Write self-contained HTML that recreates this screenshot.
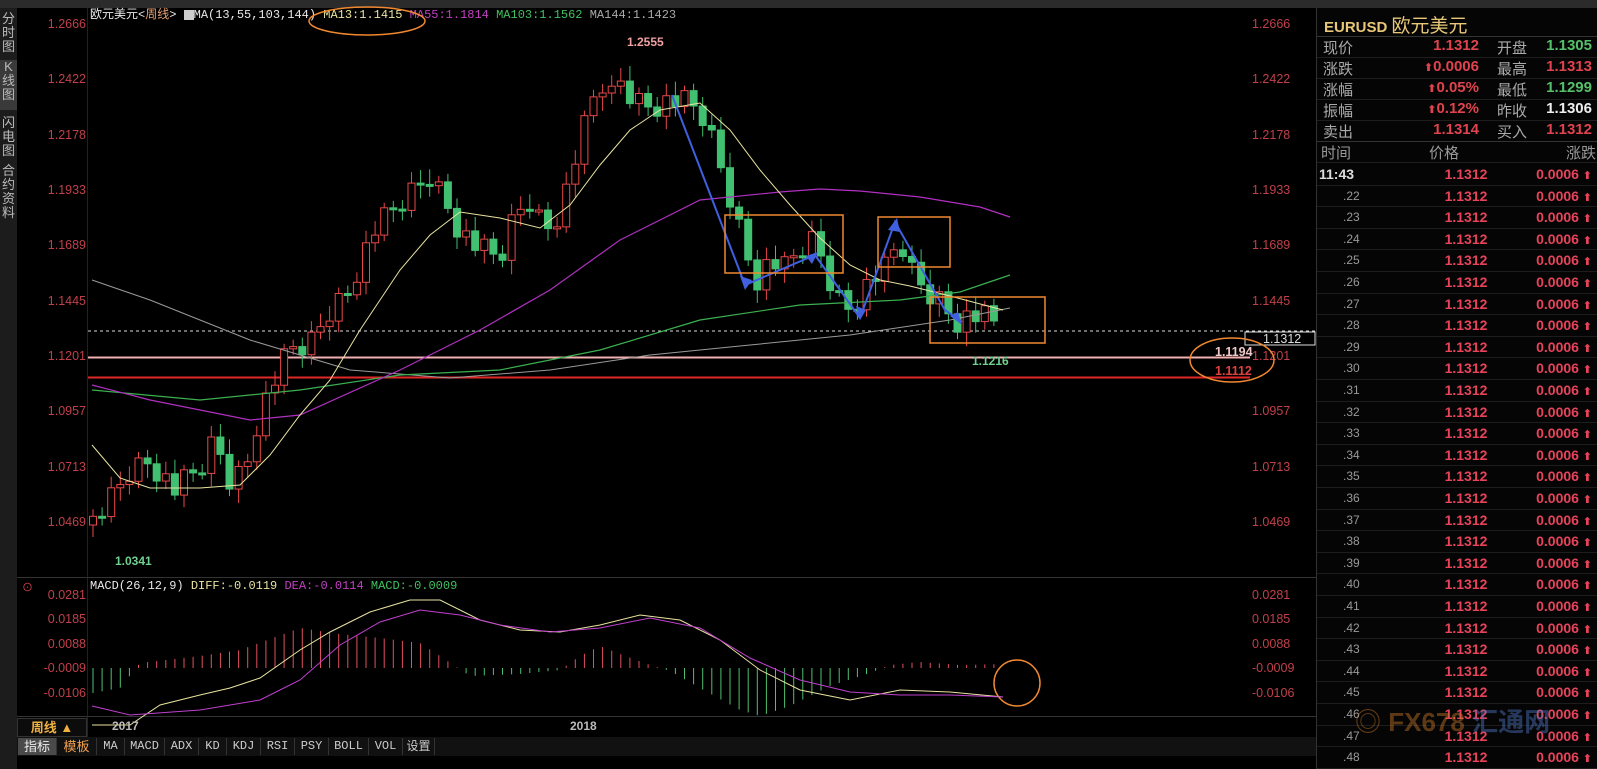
<!DOCTYPE html>
<html><head><meta charset="utf-8"><style>
*{margin:0;padding:0;box-sizing:border-box}
body{width:1597px;height:769px;background:#000;overflow:hidden;position:relative;font-family:"Liberation Sans","Noto Sans CJK SC",sans-serif;color:#ccc}
.a{position:absolute;white-space:nowrap}
.m{font-family:"Liberation Mono","Noto Sans CJK SC",monospace}
.r{color:#e0434e}.g{color:#55c06a}.w{color:#e8e8e8}
#side{position:absolute;left:0;top:8px;width:17px;height:761px;background:#1c1c1c}
.sb{position:absolute;left:0;width:17px;font-size:13px;line-height:14px;text-align:center;color:#bbb}
.lax{position:absolute;left:30px;width:56px;text-align:right;font-size:12.5px;color:#c0404a}
.rax{position:absolute;left:1252px;font-size:12.5px;color:#c0404a}
#rp{position:absolute;left:1316px;top:8px;width:281px;height:761px;background:#050505;border-left:1px solid #333}
.row{position:absolute;left:0;width:281px;height:21px;font-size:15px;border-bottom:1px solid #1e1e1e}
.row span{position:absolute;top:0}
.tr{position:absolute;left:0;width:281px;height:21.6px;border-bottom:1px solid #1d1d1d;font-size:14px;font-weight:bold}
.tr .t{position:absolute;left:26px;font-weight:normal;color:#999;font-size:12px;top:3px}
.tr .p{position:absolute;left:104px;width:90px;text-align:center;color:#e8435a;top:2px}
.tr .c{position:absolute;right:6px;color:#e8435a;top:2px}
.ar{font-family:"DejaVu Sans",sans-serif;font-size:11px}
.tb{position:absolute;top:738px;height:17px;font-size:12px;line-height:17px;text-align:center;color:#ccc;border-right:1px solid #333}
</style></head><body>
<div class="a" style="left:0;top:0;width:1597px;height:8px;background:#2b2b2b"></div>
<div id="side">
<div class="sb" style="top:4px">分<br>时<br>图</div>
<div class="sb" style="top:52px;background:#3a3a3a;height:50px">K<br>线<br>图</div>
<div class="sb" style="top:108px">闪<br>电<br>图</div>
<div class="sb" style="top:156px">合<br>约<br>资<br>料</div>
</div>
<div class="a" style="left:87px;top:8px;width:1px;height:730px;background:#222"></div>
<div class="a" style="left:17px;top:577px;width:1299px;height:1px;background:#333"></div>
<div class="a" style="left:17px;top:716px;width:1299px;height:1px;background:#333"></div>

<div class="lax" style="top:17px">1.2666</div><div class="lax" style="top:72px">1.2422</div><div class="lax" style="top:128px">1.2178</div><div class="lax" style="top:183px">1.1933</div><div class="lax" style="top:238px">1.1689</div><div class="lax" style="top:294px">1.1445</div><div class="lax" style="top:349px">1.1201</div><div class="lax" style="top:404px">1.0957</div><div class="lax" style="top:460px">1.0713</div><div class="lax" style="top:515px">1.0469</div>
<div class="rax" style="top:17px">1.2666</div><div class="rax" style="top:72px">1.2422</div><div class="rax" style="top:128px">1.2178</div><div class="rax" style="top:183px">1.1933</div><div class="rax" style="top:238px">1.1689</div><div class="rax" style="top:294px">1.1445</div><div class="rax" style="top:349px">1.1201</div><div class="rax" style="top:404px">1.0957</div><div class="rax" style="top:460px">1.0713</div><div class="rax" style="top:515px">1.0469</div>

<div class="lax" style="top:588px">0.0281</div><div class="lax" style="top:612px">0.0185</div><div class="lax" style="top:637px">0.0088</div><div class="lax" style="top:661px">-0.0009</div><div class="lax" style="top:686px">-0.0106</div>
<div class="rax" style="top:588px">0.0281</div><div class="rax" style="top:612px">0.0185</div><div class="rax" style="top:637px">0.0088</div><div class="rax" style="top:661px">-0.0009</div><div class="rax" style="top:686px">-0.0106</div>

<div class="a m" style="left:90px;top:8px;font-size:12px;line-height:14px"><span class="w">欧元美元&lt;</span><span style="color:#e8a070">周线</span><span class="w">&gt; </span><span style="display:inline-block;width:10px;height:10px;background:#ccc;vertical-align:middle"></span><span class="w">MA(13,55,103,144)</span> <span style="color:#e8e4a0">MA13:1.1415</span> <span style="color:#c040c0">MA55:1.1814</span> <span style="color:#40c060">MA103:1.1562</span> <span style="color:#aaa">MA144:1.1423</span></div>
<div class="a m" style="left:90px;top:579px;font-size:12px"><span class="w">MACD(26,12,9)</span> <span style="color:#e8e4a0">DIFF:-0.0119</span> <span style="color:#c040c0">DEA:-0.0114</span> <span style="color:#40c060">MACD:-0.0009</span></div>
<div class="a" style="left:22px;top:579px;color:#e04050;font-size:11px">⊙</div>

<svg class="a" style="left:0;top:0" width="1316" height="769" id="ch">
<line x1="88" y1="331" x2="1316" y2="331" stroke="#ddd" stroke-dasharray="3,3"/>
<line x1="88" y1="357.5" x2="1250" y2="357.5" stroke="#f0b0b0" stroke-width="2"/>
<line x1="88" y1="377.5" x2="1250" y2="377.5" stroke="#e02828" stroke-width="2"/>
<rect x="1245" y="332" width="70" height="13" fill="none" stroke="#ddd"/>
<text x="1263" y="343" fill="#ddd" font-size="12.5" font-family="Liberation Sans">1.1312</text>
<text x="1215" y="356" fill="#f0c8c8" font-size="12.5" font-weight="bold" font-family="Liberation Sans">1.1194</text>
<text x="1215" y="375" fill="#e04040" font-size="12.5" font-weight="bold" font-family="Liberation Sans">1.1112</text>
<g id="cd"></g>
<polyline fill="none" stroke="#9a9a9a" stroke-width="1" points="92,280 150,300 250,340 350,370 450,378 550,370 650,355 750,345 850,335 950,320 1010,308"/>
<polyline fill="none" stroke="#3cb050" stroke-width="1.2" points="92,390 200,400 300,390 400,375 500,370 600,350 700,320 800,305 900,300 960,292 1010,275"/>
<polyline fill="none" stroke="#b030c0" stroke-width="1.2" points="92,385 150,400 250,420 300,415 400,370 480,330 550,290 620,240 700,200 780,192 820,189 860,191 920,197 980,207 1010,217"/>
<polyline fill="none" stroke="#e8e4a0" stroke-width="1" points="92,445 120,478 150,488 200,488 240,485 270,455 300,415 330,380 360,330 400,270 430,235 460,212 500,218 540,228 570,205 600,165 630,130 660,110 700,103 730,130 760,170 790,205 820,238 850,265 880,280 910,286 950,296 1003,310"/>
<g fill="none" stroke="#4060e0" stroke-width="2">
<polyline points="672,95 745,285 815,255 860,318 895,222 945,310 962,322"/>
</g>
<g fill="#4060e0"><polygon points="745,290 740,276 752,280"/><polygon points="818,252 806,256 812,264"/><polygon points="860,320 856,306 866,310"/><polygon points="897,218 888,230 900,232"/><polygon points="962,325 950,316 958,312"/></g>
<g fill="none" stroke="#f08830" stroke-width="1.5">
<rect x="725" y="215" width="118" height="58"/><rect x="878" y="217" width="72" height="50"/><rect x="930" y="297" width="115" height="46"/>
<ellipse cx="367" cy="21" rx="58" ry="14"/><ellipse cx="1232" cy="360" rx="42" ry="22"/><circle cx="1017" cy="683" r="23"/>
</g>
<text x="627" y="46" fill="#f0a0a0" font-size="12" font-weight="bold" font-family="Liberation Sans">1.2555</text>
<text x="115" y="565" fill="#70d090" font-size="12" font-weight="bold" font-family="Liberation Sans">1.0341</text>
<text x="972" y="365" fill="#70d090" font-size="12" font-weight="bold" font-family="Liberation Sans">1.1216</text>
<g id="hist"></g>
<polyline fill="none" stroke="#e8e4a0" stroke-width="1" points="92,725 130,725 160,705 200,695 230,688 260,678 300,650 330,632 370,612 410,600 440,600 480,620 520,630 560,632 600,625 640,615 680,620 720,640 760,670 800,690 850,700 900,690 950,692 1003,697"/>
<polyline fill="none" stroke="#c040d0" stroke-width="1" points="92,706 130,715 200,710 260,700 300,680 340,645 380,622 420,610 460,615 500,625 550,632 600,628 650,618 700,628 750,658 800,680 850,692 900,695 950,695 1003,697"/>
</svg>

<div class="a" style="left:17px;top:718px;width:70px;height:19px;background:#0c0c0c;border:1px solid #333;color:#f0b040;font-size:13px;font-weight:bold;text-align:center;line-height:17px">周线 ▲</div>
<div class="a" style="left:112px;top:719px;color:#bbb;font-size:12px;font-weight:bold">2017</div>
<div class="a" style="left:570px;top:719px;color:#bbb;font-size:12px;font-weight:bold">2018</div>
<div class="a" style="left:17px;top:737px;width:1299px;height:19px;background:#111"></div>
<div class="tb" style="left:18px;width:39px;background:#4a4a4a;color:#eee;font-size:13px">指标</div>
<div class="tb" style="left:57px;width:40px;color:#f0a050;font-size:13px">模板</div>
<div class="tb m" style="left:97px;width:28px">MA</div>
<div class="tb m" style="left:125px;width:40px">MACD</div>
<div class="tb m" style="left:165px;width:34px">ADX</div>
<div class="tb m" style="left:199px;width:28px">KD</div>
<div class="tb m" style="left:227px;width:34px">KDJ</div>
<div class="tb m" style="left:261px;width:34px">RSI</div>
<div class="tb m" style="left:295px;width:34px">PSY</div>
<div class="tb m" style="left:329px;width:40px">BOLL</div>
<div class="tb m" style="left:369px;width:34px">VOL</div>
<div class="tb" style="left:403px;width:32px">设置</div>

<div id="rp">
<div class="a" style="left:7px;top:3px;font-size:15px;color:#e8c878"><span style="font-weight:bold">EURUSD</span> <span style="font-size:19px">欧元美元</span></div>
<div class="a" style="left:0;top:28px;width:281px;height:1px;background:#333"></div>
<div class="row" style="top:29px"><span style="left:6px;color:#aaa">现价</span><span class="r" style="left:80px;width:82px;text-align:right;font-weight:bold">1.1312</span><span style="left:180px;color:#aaa">开盘</span><span class="g" style="right:6px;font-weight:bold">1.1305</span></div>
<div class="row" style="top:50px"><span style="left:6px;color:#aaa">涨跌</span><span class="r" style="left:80px;width:82px;text-align:right;font-weight:bold"><span class="ar" style="position:static">⬆</span>0.0006</span><span style="left:180px;color:#aaa">最高</span><span class="r" style="right:6px;font-weight:bold">1.1313</span></div>
<div class="row" style="top:71px"><span style="left:6px;color:#aaa">涨幅</span><span class="r" style="left:80px;width:82px;text-align:right;font-weight:bold"><span class="ar" style="position:static">⬆</span>0.05%</span><span style="left:180px;color:#aaa">最低</span><span class="g" style="right:6px;font-weight:bold">1.1299</span></div>
<div class="row" style="top:92px"><span style="left:6px;color:#aaa">振幅</span><span class="r" style="left:80px;width:82px;text-align:right;font-weight:bold"><span class="ar" style="position:static">⬆</span>0.12%</span><span style="left:180px;color:#aaa">昨收</span><span style="right:6px;color:#eee;font-weight:bold">1.1306</span></div>
<div class="row" style="top:113px;border-bottom:1px solid #333"><span style="left:6px;color:#aaa">卖出</span><span class="r" style="left:80px;width:82px;text-align:right;font-weight:bold">1.1314</span><span style="left:180px;color:#aaa">买入</span><span class="r" style="right:6px;font-weight:bold">1.1312</span></div>
<div class="row" style="top:134px"><span style="left:4px;color:#999">时间</span><span style="left:112px;color:#999">价格</span><span style="right:2px;color:#999">涨跌</span></div>
<div id="trs"></div>
<div class="a" style="left:38px;top:694px;font-size:26px;font-weight:bold;color:rgba(200,120,40,0.45)">◎ FX678 <span style="color:rgba(80,120,200,0.45)">汇通网</span></div>
</div>
<script>
var h='',lbl=['11:43'];for(var i=22;i<=48;i++)lbl.push('.'+i);
for(var i=0;i<lbl.length;i++){var f=i==0;h+='<div class="tr" style="top:'+(156+i*21.6)+'px"><span class="t" style="'+(f?'left:2px;color:#ddd;font-weight:bold;font-size:14px;top:2px':'')+'">'+lbl[i]+'</span><span class="p">1.1312</span><span class="c">0.0006<span class="ar"> ⬆</span></span></div>';}
document.getElementById('trs').innerHTML=h;
var K=[[92,520],[110,500],[130,470],[150,460],[175,490],[200,470],[215,440],[230,480],[245,470],[260,410],[275,380],[290,350],[310,345],[330,310],[350,290],[360,260],[375,230],[395,210],[415,190],[430,175],[445,200],[460,230],[480,250],[500,260],[515,215],[530,200],[545,230],[560,210],[575,160],[590,110],[600,80],[610,100],[620,80],[635,100],[650,105],[670,100],[690,105],[705,120],[715,150],[725,180],[740,230],[755,280],[770,260],[785,270],[800,250],[815,240],[830,280],[845,310],[855,300],[870,280],[885,270],[900,240],[910,270],[925,290],[940,300],[955,320],[970,315],[990,320],[1003,332]];
function yAt(x){for(var i=1;i<K.length;i++)if(x<=K[i][0]){var a=K[i-1],b=K[i];return a[1]+(b[1]-a[1])*(x-a[0])/(b[0]-a[0]);}return 332;}
var s='',prev=525,n=0;
for(var x=93;x<=1003;x+=9.1){n++;var c=yAt(x)+((n*37)%11-5)*2.6;var o=prev;var hi=Math.min(o,c)-5-(n*13)%11,lo=Math.max(o,c)+5+(n*7)%10;var up=c<o;var col=up?'#e84848':'#40c070';
s+='<line x1="'+x+'" y1="'+hi+'" x2="'+x+'" y2="'+lo+'" stroke="'+col+'"/>';
var t=Math.min(o,c),hh=Math.max(2,Math.abs(o-c));
s+='<rect x="'+(x-3.5)+'" y="'+t+'" width="7" height="'+hh+'" fill="'+(up?'#000':col)+'" stroke="'+col+'"/>';prev=c;}
document.getElementById('cd').innerHTML=s;
var H=[[93,-25],[120,-20],[140,5],[200,12],[240,18],[300,40],[340,34],[380,30],[420,25],[440,12],[455,2],[470,-8],[520,-6],[560,-2],[580,12],[600,22],[620,14],[650,3],[670,-3],[700,-20],[740,-42],[760,-48],[790,-38],[830,-18],[870,-5],[890,3],[920,6],[960,3],[1003,4]];
function hAt(x){for(var i=1;i<H.length;i++)if(x<=H[i][0]){var a=H[i-1],b=H[i];return a[1]+(b[1]-a[1])*(x-a[0])/(b[0]-a[0]);}return 0;}
var z=668,q='';for(var x=93;x<=1003;x+=9.1){var v=hAt(x);q+='<line x1="'+x+'" y1="'+z+'" x2="'+x+'" y2="'+(z-v)+'" stroke="'+(v>0?'#e05060':'#50c070')+'"/>';}
document.getElementById('hist').innerHTML=q;
</script>
</body></html>
